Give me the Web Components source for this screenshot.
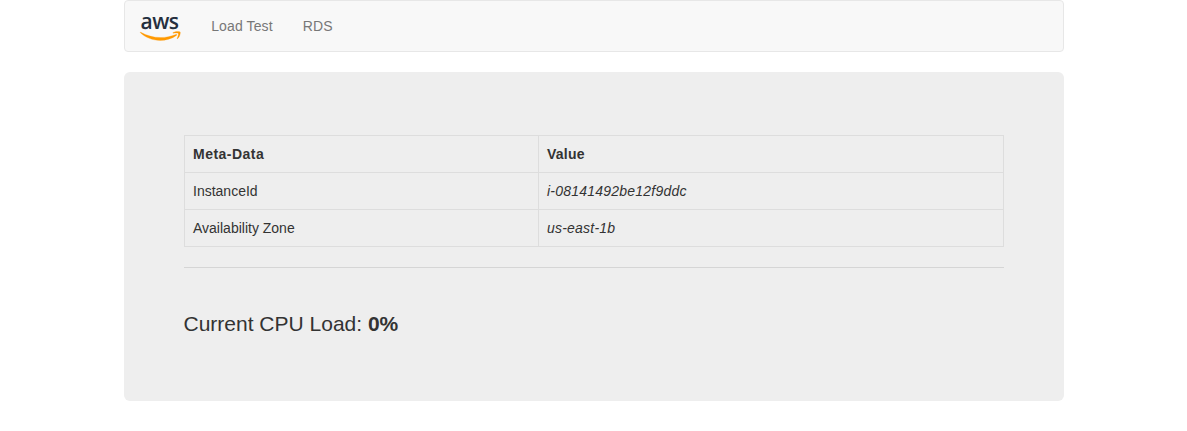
<!DOCTYPE html>
<html lang="en">
<head>
<meta charset="utf-8">
<title>Load Test</title>
<style>
body{margin:0;background:#fff;color:#333;font:14px/20px "Liberation Sans",Arial,sans-serif}
</style>
</head>
<body>
<app-page>
  <nav-bar>
    <nav-link>Load Test</nav-link>
    <nav-link>RDS</nav-link>
  </nav-bar>
  <jumbo-panel>
    <meta-table></meta-table>
    <cpu-load value="0%"></cpu-load>
  </jumbo-panel>
</app-page>
<script>
function define(name, html, init) {
  const template = document.createElement('template');
  template.innerHTML = '<style>*{box-sizing:border-box}</style>' + html;
  customElements.define(name, class extends HTMLElement {
    constructor() {
      super();
      this.attachShadow({mode: 'open'}).append(template.content.cloneNode(true));
    }
    connectedCallback() { if (init) init(this); }
  });
}

define('app-page', `
<style>:host{display:block;width:940px;margin:0 auto}</style><slot></slot>`);

define('aws-logo', `
<style>:host{display:block;width:41px;height:25px}svg{display:block;overflow:visible}
text{font:600 22px "Open Sans","Noto Sans",sans-serif;fill:#252f3e;letter-spacing:-.6px;text-rendering:geometricPrecision}</style>
<svg width="41" height="25" viewBox="0 0 41 25" aria-label="aws">
  <text x="0.6" y="12.7" textLength="37.8" lengthAdjust="spacingAndGlyphs">aws</text>
  <g fill="#f90" stroke="#f90" stroke-width="2" transform="translate(0 .3) scale(.1333)">
    <path d="M273.5,143.7c-32.9,24.3-80.7,37.2-121.8,37.2c-57.6,0-109.5-21.3-148.7-56.7c-3.1-2.8-0.3-6.6,3.4-4.4c42.4,24.6,94.7,39.5,148.8,39.5c36.5,0,76.6-7.6,113.5-23.2C274.2,133.6,278.9,139.7,273.5,143.7z"/>
    <path d="M287.2,128.1c-4.2-5.4-27.8-2.6-38.5-1.3c-3.2,0.4-3.7-2.4-0.8-4.5c18.8-13.2,49.7-9.4,53.3-5c3.6,4.5-1,35.4-18.6,50.2c-2.7,2.3-5.3,1.1-4.1-1.9C282.5,155.7,291.4,133.4,287.2,128.1z"/>
  </g>
</svg>`);

define('nav-bar', `
<style>:host{display:flex;box-sizing:border-box;height:52px;margin-bottom:20px;background:#f8f8f8;border:1px solid #e7e7e7;border-radius:4px}
aws-logo{margin:15px 15.5px 0 15.2px}</style>
<aws-logo></aws-logo><slot></slot>`);

define('nav-link', `
<style>:host{display:block;padding:15px;color:#777;letter-spacing:.12px}</style><slot></slot>`);

define('jumbo-panel', `
<style>:host{display:block;box-sizing:border-box;height:329px;padding:63px 60px 48px;background:#eee;border-radius:6px}</style><slot></slot>`);

define('meta-table', `
<style>:host{display:block;padding-bottom:20px;border-bottom:1px solid #d5d5d5}
table{width:100%;border-collapse:collapse;table-layout:fixed;border:1px solid #ddd}
th,td{padding:8px 8px 8px 8.5px;border:1px solid #ddd;text-align:left;vertical-align:top}
th{letter-spacing:.48px}
th+th{letter-spacing:.25px}
i{letter-spacing:.22px}
th:first-child{width:354px}</style>
<table>
  <tr><th>Meta-Data</th><th>Value</th></tr>
  <tr><td>InstanceId</td><td><i>i-08141492be12f9ddc</i></td></tr>
  <tr><td>Availability Zone</td><td><i>us-east-1b</i></td></tr>
</table>`);

define('cpu-load', `
<style>:host{display:block;padding-top:41px;font-size:21px;line-height:30px}</style>
Current CPU Load: <b></b>`, el => {
  el.shadowRoot.querySelector('b').textContent = el.getAttribute('value');
});
</script>
</body>
</html>
